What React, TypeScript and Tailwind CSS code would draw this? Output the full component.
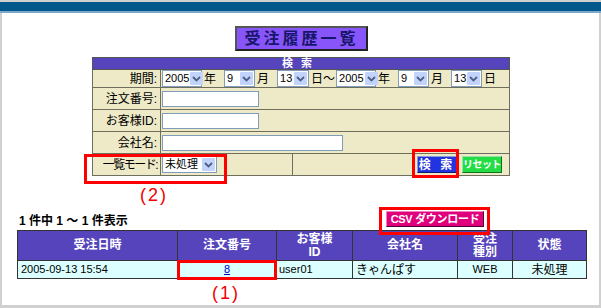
const Chevron = () => (
  <svg width="9" height="6" viewBox="0 0 9 6">
    <path d="M1 1 L4.5 4.5 L8 1" fill="none" stroke="#4d6185" strokeWidth="1.8" />
  </svg>
);

const Select = ({ value, className }: { value: string; className: string }) => (
  <span className={`flex h-[17px] shrink-0 items-stretch border border-[#7f9db9] bg-white ${className}`}>
    <span className="flex flex-1 items-center pl-[2px] text-[11px] leading-none">{value}</span>
    <span className="m-[1px] flex w-[13px] shrink-0 items-center justify-center rounded-[1px] bg-[#c2d3fc]">
      <Chevron />
    </span>
  </span>
);

const Unit = ({ t, last }: { t: string; last?: boolean }) => (
  <span className={`ml-[2px] shrink-0 text-[12px] leading-none ${last ? "mr-[1px]" : "mr-[8px]"}`}>{t}</span>
);

const label = "border border-[#6e6e5e] bg-[#eeeac8] pr-[3px] text-right text-[12px] leading-none whitespace-nowrap";
const cell = "border border-[#6e6e5e] bg-[#eeeac8] pl-[1px]";
const th = "border border-[#333] bg-[#5544bb] text-center text-[12px] font-bold leading-[13px] text-white";
const td = "border border-[#333] bg-[#dcffff] text-[11px] leading-none";

export default function App() {
  return (
    <div className="relative flex h-[308px] w-[601px] flex-col overflow-hidden border-t-2 border-[#d0d0d0] bg-white font-['Liberation_Sans','Noto_Sans_CJK_JP',sans-serif] text-black">
      <div className="h-[9px] bg-[#00578a]" />
      <div className="h-[2px] bg-[#7ea7c9]" />
      <div className="flex-1 border-x-2 border-b-[3px] border-[#d0d0d0]">
        <div className="ml-[233px] mt-[13px] flex h-[25px] w-[133px] items-center justify-center border-2 border-t-[#555] border-l-[#555] border-b-[#222] border-r-[#222] bg-[#8855fa] text-[16px] font-bold tracking-[3px] text-[#16166a]">
          受注履歴一覧
        </div>

        <table className="ml-[90px] mt-[6px] w-[417px] table-fixed border-collapse border border-[#555]">
          <colgroup>
            <col className="w-[68px]" />
            <col className="w-[132px]" />
            <col className="w-[217px]" />
          </colgroup>
          <tbody>
            <tr className="h-[12px]">
              <td colSpan={3} className="border border-[#555] bg-[#5544bb] text-center text-[11px] font-bold leading-none tracking-[8px] text-white">
                検索
              </td>
            </tr>
            <tr className="h-[18px]">
              <td className={label}>期間:</td>
              <td colSpan={2} className={cell}>
                <div className="flex items-center">
                  <Select value="2005" className="w-[40px]" />
                  <Unit t="年" />
                  <Select value="9" className="w-[31px]" />
                  <Unit t="月" />
                  <Select value="13" className="w-[32px]" />
                  <Unit t="日～" last />
                  <Select value="2005" className="w-[40px]" />
                  <Unit t="年" />
                  <Select value="9" className="w-[31px]" />
                  <Unit t="月" />
                  <Select value="13" className="w-[31px]" />
                  <Unit t="日" />
                </div>
              </td>
            </tr>
            <tr className="h-[22px]">
              <td className={label}>注文番号:</td>
              <td colSpan={2} className={cell}>
                <div className="h-[16px] w-[97px] border border-[#7f9db9] bg-white" />
              </td>
            </tr>
            <tr className="h-[22px]">
              <td className={label}>お客様ID:</td>
              <td colSpan={2} className={cell}>
                <div className="h-[16px] w-[97px] border border-[#7f9db9] bg-white" />
              </td>
            </tr>
            <tr className="h-[22px]">
              <td className={label}>会社名:</td>
              <td colSpan={2} className={cell}>
                <div className="h-[16px] w-[181px] border border-[#7f9db9] bg-white" />
              </td>
            </tr>
            <tr className="h-[22px]">
              <td className={`${label} tracking-[-1.5px]`}>一覧モード:</td>
              <td className={cell}>
                <Select value="未処理" className="w-[55px]" />
              </td>
              <td className="border border-[#6e6e5e] bg-[#eeeac8] pr-[7px]">
                <div className="flex justify-end gap-[5px]">
                  <button className="flex h-[17px] w-[40px] items-center justify-center whitespace-nowrap border border-t-[#8d9bd8] border-l-[#8d9bd8] border-b-[#10186a] border-r-[#10186a] bg-[#2233e0] text-[12px] font-bold leading-none tracking-[3px] text-white">
                    検 索
                  </button>
                  <button className="flex h-[17px] w-[40px] items-center justify-center whitespace-nowrap border border-t-[#9be0a8] border-l-[#9be0a8] border-b-[#107020] border-r-[#107020] bg-[#22dd44] text-[10px] font-bold leading-none tracking-[-0.5px] text-white">
                    リセット
                  </button>
                </div>
              </td>
            </tr>
          </tbody>
        </table>

        <div className="mt-[35px] flex items-end justify-between pl-[17px] pr-[115px]">
          <span className="text-[12px] font-bold leading-none">1 件中 1 ～ 1 件表示</span>
          <button className="flex h-[16px] w-[98px] items-center justify-center whitespace-nowrap border border-t-[#f080c0] border-l-[#f080c0] border-b-[#500030] border-r-[#500030] bg-[#e0007c] text-[11px] font-bold leading-none tracking-[-0.3px] text-white">
            CSV ダウンロード
          </button>
        </div>

        <table className="ml-[15px] mt-[3px] w-[569px] table-fixed border-collapse border border-[#444]">
          <colgroup>
            <col className="w-[160px]" />
            <col className="w-[99px]" />
            <col className="w-[76px]" />
            <col className="w-[105px]" />
            <col className="w-[55px]" />
            <col className="w-[74px]" />
          </colgroup>
          <thead>
            <tr className="h-[30px]">
              <th className={th}>受注日時</th>
              <th className={th}>注文番号</th>
              <th className={th}>
                お客様
                <br />
                ID
              </th>
              <th className={th}>会社名</th>
              <th className={th}>
                受注
                <br />
                種別
              </th>
              <th className={th}>状態</th>
            </tr>
          </thead>
          <tbody>
            <tr className="h-[18px]">
              <td className={`${td} pl-[3px]`}>2005-09-13 15:54</td>
              <td className={`${td} text-center`}>
                <span className="text-[#0000cc] underline">8</span>
              </td>
              <td className={`${td} pl-[2px]`}>user01</td>
              <td className={`${td} pl-[3px] text-[12px]`}>きゃんぱす</td>
              <td className={`${td} text-center`}>WEB</td>
              <td className={`${td} text-center text-[12px]`}>未処理</td>
            </tr>
          </tbody>
        </table>
      </div>

      <div className="absolute left-[84px] top-[152px] h-[30px] w-[143px] border-[3px] border-[#ff0000]" />
      <div className="absolute left-[412px] top-[147px] h-[29px] w-[47px] border-[3px] border-[#ff0000]" />
      <div className="absolute left-[379px] top-[205px] h-[28px] w-[111px] border-[3px] border-[#ff0000]" />
      <div className="absolute left-[177px] top-[258px] h-[20px] w-[100px] border-[3px] border-[#ff0000]" />
      <span className="absolute left-[140px] top-[184px] text-[18px] leading-none tracking-[2px] text-[#f00000]">(2)</span>
      <span className="absolute left-[212px] top-[282px] text-[18px] leading-none tracking-[2px] text-[#f00000]">(1)</span>
    </div>
  );
}
